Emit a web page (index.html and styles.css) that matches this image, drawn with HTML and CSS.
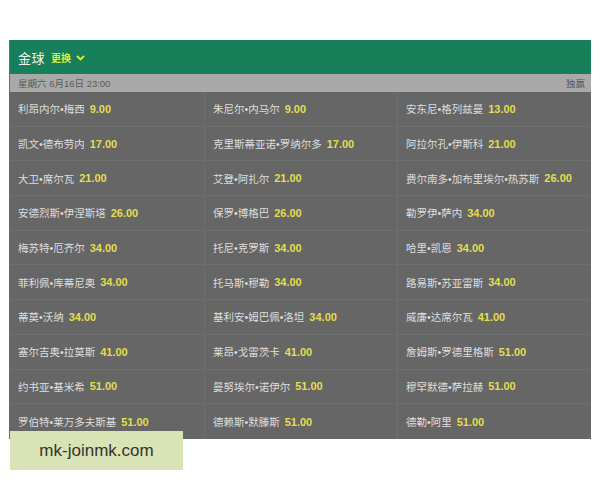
FILE: index.html
```html
<!DOCTYPE html>
<html lang="zh">
<head>
<meta charset="utf-8">
<link rel="stylesheet" href="styles.css">
</head>
<body>
<div class="panel">
  <div class="head">
    <span class="title">金球</span>
    <span class="change">更换</span>
    <svg class="chev" width="9" height="6" viewBox="0 0 9 6"><path d="M1 1 L4.5 4.5 L8 1" fill="none" stroke="#d8ef3a" stroke-width="1.8"/></svg>
  </div>
  <div class="date"><span>星期六 6月16日 23:00</span><span>独赢</span></div>
  <div class="grid">
    <div class="cell">利昂内尔•梅西<b>9.00</b></div>
    <div class="cell">朱尼尔•内马尔<b>9.00</b></div>
    <div class="cell">安东尼•格列兹曼<b>13.00</b></div>
    <div class="cell">凯文•德布劳内<b>17.00</b></div>
    <div class="cell">克里斯蒂亚诺•罗纳尔多<b>17.00</b></div>
    <div class="cell">阿拉尔孔•伊斯科<b>21.00</b></div>
    <div class="cell">大卫•席尔瓦<b>21.00</b></div>
    <div class="cell">艾登•阿扎尔<b>21.00</b></div>
    <div class="cell">费尔南多•加布里埃尔•热苏斯<b>26.00</b></div>
    <div class="cell">安德烈斯•伊涅斯塔<b>26.00</b></div>
    <div class="cell">保罗•博格巴<b>26.00</b></div>
    <div class="cell">勒罗伊•萨内<b>34.00</b></div>
    <div class="cell">梅苏特•厄齐尔<b>34.00</b></div>
    <div class="cell">托尼•克罗斯<b>34.00</b></div>
    <div class="cell">哈里•凯恩<b>34.00</b></div>
    <div class="cell">菲利佩•库蒂尼奥<b>34.00</b></div>
    <div class="cell">托马斯•穆勒<b>34.00</b></div>
    <div class="cell">路易斯•苏亚雷斯<b>34.00</b></div>
    <div class="cell">蒂莫•沃纳<b>34.00</b></div>
    <div class="cell">基利安•姆巴佩•洛坦<b>34.00</b></div>
    <div class="cell">威廉•达席尔瓦<b>41.00</b></div>
    <div class="cell">塞尔吉奥•拉莫斯<b>41.00</b></div>
    <div class="cell">莱昂•戈雷茨卡<b>41.00</b></div>
    <div class="cell">詹姆斯•罗德里格斯<b>51.00</b></div>
    <div class="cell">约书亚•基米希<b>51.00</b></div>
    <div class="cell">曼努埃尔•诺伊尔<b>51.00</b></div>
    <div class="cell">穆罕默德•萨拉赫<b>51.00</b></div>
    <div class="cell">罗伯特•莱万多夫斯基<b>51.00</b></div>
    <div class="cell">德赖斯•默滕斯<b>51.00</b></div>
    <div class="cell">德勒•阿里<b>51.00</b></div>
  </div>
</div>
<div class="mark">mk-joinmk.com</div>
</body>
</html>
```
FILE: styles.css
```css
html, body {
  margin: 0;
  padding: 0;
  background: #ffffff;
}
body {
  font-family: "Liberation Sans", "Noto Sans CJK SC", sans-serif;
  width: 600px;
  height: 480px;
  position: relative;
  overflow: hidden;
}
.panel {
  margin: 40px 0 0 9px;
  width: 582px;
  border-left: 1px solid #5f6f86;
  box-sizing: border-box;
}
.head {
  height: 34px;
  background: #177f59;
  display: flex;
  align-items: center;
  padding-left: 8px;
}
.title {
  color: #f2f5f2;
  font-size: 13px;
  letter-spacing: 0.5px;
}
.change {
  color: #d8ef3a;
  font-size: 10px;
  font-weight: bold;
  margin-left: 6px;
}
.chev {
  margin-left: 5px;
  margin-top: 1px;
}
.date {
  height: 18px;
  background: #a9a9a9;
  display: flex;
  justify-content: space-between;
  align-items: center;
  padding: 0 6px 0 8px;
  font-size: 9.5px;
  color: #5a5a5a;
}
.grid {
  display: grid;
  grid-template-columns: 195px 193px 1fr;
  grid-auto-rows: 34.7px;
  background: #666666;
}
.cell {
  display: flex;
  align-items: center;
  padding-left: 8px;
  font-size: 10.5px;
  color: #dedede;
  border-bottom: 1px solid #6f6f6f;
  border-right: 1px solid #707070;
  white-space: nowrap;
}
.cell:nth-child(3n) {
  border-right: none;
}
.cell:nth-last-child(-n+3) {
  border-bottom: none;
}
.cell b {
  color: #e2de4e;
  font-weight: bold;
  font-size: 11px;
  margin-left: 5px;
}
.mark {
  position: absolute;
  left: 10px;
  top: 431px;
  width: 173px;
  height: 39px;
  background: #d8e3b6;
  color: #35332a;
  font-family: "Liberation Sans", sans-serif;
  font-size: 17px;
  display: flex;
  align-items: center;
  justify-content: center;
}
```
